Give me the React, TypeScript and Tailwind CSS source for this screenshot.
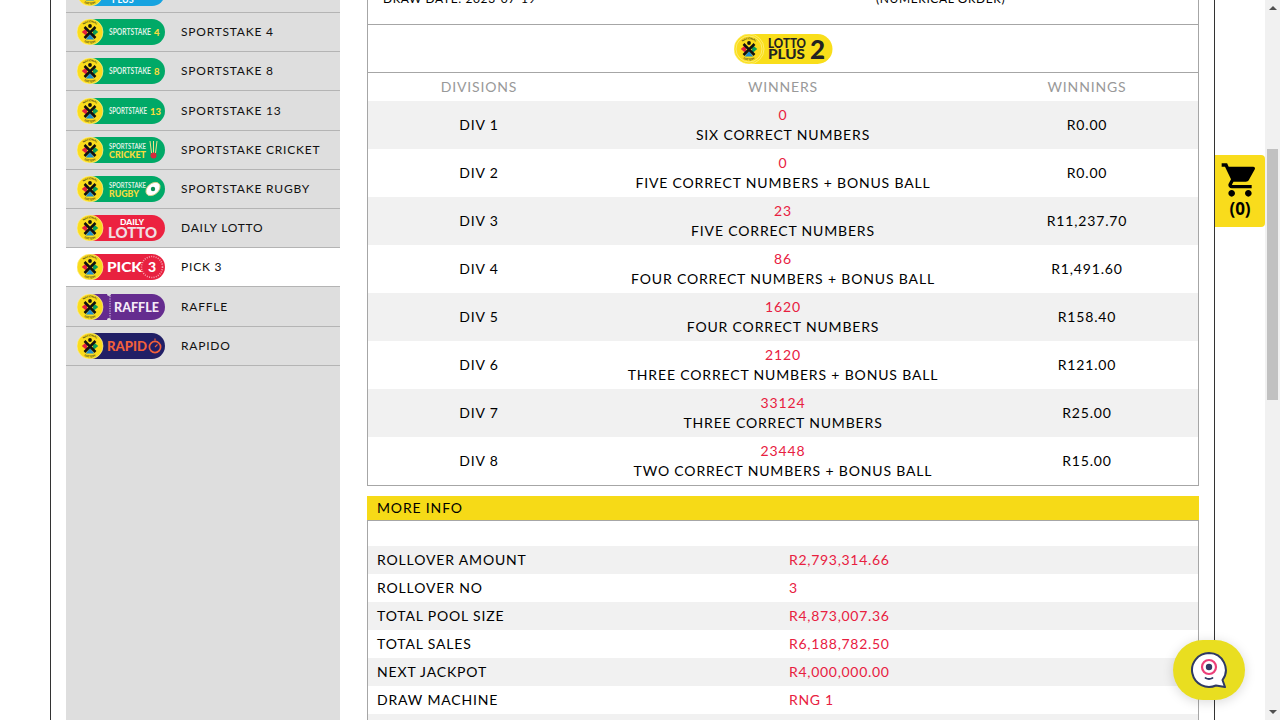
import { ReactNode } from "react"

const sideItems = [
  { id: "sp4", label: "SPORTSTAKE 4", height: "h-[39px]" },
  { id: "sp8", label: "SPORTSTAKE 8", height: "h-[39px]" },
  { id: "sp13", label: "SPORTSTAKE 13", height: "h-[40px]" },
  { id: "cricket", label: "SPORTSTAKE CRICKET", height: "h-[39px]" },
  { id: "rugby", label: "SPORTSTAKE RUGBY", height: "h-[39px]" },
  { id: "daily", label: "DAILY LOTTO", height: "h-[39px]" },
  { id: "pick3", label: "PICK 3", height: "h-[39px]", active: true },
  { id: "raffle", label: "RAFFLE", height: "h-[40px]" },
  { id: "rapido", label: "RAPIDO", height: "h-[39px]" },
]

const divisions = [
  { div: "DIV 1", count: "0", text: "SIX CORRECT NUMBERS", win: "R0.00" },
  { div: "DIV 2", count: "0", text: "FIVE CORRECT NUMBERS + BONUS BALL", win: "R0.00" },
  { div: "DIV 3", count: "23", text: "FIVE CORRECT NUMBERS", win: "R11,237.70" },
  { div: "DIV 4", count: "86", text: "FOUR CORRECT NUMBERS + BONUS BALL", win: "R1,491.60" },
  { div: "DIV 5", count: "1620", text: "FOUR CORRECT NUMBERS", win: "R158.40" },
  { div: "DIV 6", count: "2120", text: "THREE CORRECT NUMBERS + BONUS BALL", win: "R121.00" },
  { div: "DIV 7", count: "33124", text: "THREE CORRECT NUMBERS", win: "R25.00" },
  { div: "DIV 8", count: "23448", text: "TWO CORRECT NUMBERS + BONUS BALL", win: "R15.00" },
]

const moreInfo = [
  ["ROLLOVER AMOUNT", "R2,793,314.66"],
  ["ROLLOVER NO", "3"],
  ["TOTAL POOL SIZE", "R4,873,007.36"],
  ["TOTAL SALES", "R6,188,782.50"],
  ["NEXT JACKPOT", "R4,000,000.00"],
  ["DRAW MACHINE", "RNG 1"],
  ["", ""],
]

const sans = "Lato, sans-serif"

// round national lottery badge, 26 units across
const Badge = () => (
  <g>
    <circle cx="13" cy="13" r="13" fill="#fbdc1c" stroke="#fff4a8" strokeWidth="0.6" />
    <path d="M4.8 13 L10 8.5 L10 17.5 Z" fill="#e2233d" />
    <path d="M21.2 13 L16 8.5 L16 17.5 Z" fill="#0f9d58" />
    <path d="M13 15 L8.8 20.4 L17.2 20.4 Z" fill="#1d8fd1" />
    <path d="M7.5 8 L18.5 19 M18.5 8 L7.5 19" stroke="#111" strokeWidth="2.5" />
    <circle cx="13" cy="7" r="1.9" fill="#111" />
    <path id="ringTop" d="M3.4 13 A9.6 9.6 0 0 1 22.6 13" fill="none" />
    <path id="ringBottom" d="M1.6 13 A11.4 11.4 0 0 0 24.4 13" fill="none" />
    <text fontSize="2.8" fontWeight="700" fontFamily={sans} fill="#3a3a1a" textAnchor="middle" letterSpacing="0">
      <textPath href="#ringTop" startOffset="50%">NATIONAL</textPath>
    </text>
    <text fontSize="2.8" fontWeight="700" fontFamily={sans} fill="#3a3a1a" textAnchor="middle" letterSpacing="0">
      <textPath href="#ringBottom" startOffset="50%">LOTTERY</textPath>
    </text>
  </g>
)

const Logo = ({ id }: { id: string }) => {
  const fills: Record<string, string> = {
    sp4: "#00a967",
    sp8: "#00a967",
    sp13: "#00a967",
    cricket: "#00a967",
    rugby: "#00a967",
    daily: "#ec2240",
    pick3: "#e8213f",
    raffle: "#652c8f",
    rapido: "#211f66",
  }
  let inner: ReactNode = null
  if (id === "sp4" || id === "sp8" || id === "sp13") {
    const n = id === "sp4" ? "4" : id === "sp8" ? "8" : "13"
    inner = (
      <>
        <text x="32" y="16" fontSize="8.5" fontWeight="700" fontFamily={sans} fill="#dff0e4" textLength={id === "sp13" ? 38 : 42} lengthAdjust="spacingAndGlyphs" letterSpacing="0">SPORTSTAKE</text>
        <text x={id === "sp13" ? 73 : 77} y="16.5" fontSize="9.5" fontWeight="900" fontFamily={sans} fill="#f7dc3c" letterSpacing="0">{n}</text>
      </>
    )
  }
  if (id === "cricket") {
    inner = (
      <>
        <text x="32" y="12" fontSize="7.5" fontWeight="700" fontFamily={sans} fill="#dff0e4" textLength="37" lengthAdjust="spacingAndGlyphs" letterSpacing="0">SPORTSTAKE</text>
        <text x="32" y="21" fontSize="8.5" fontWeight="900" fontFamily={sans} fill="#f7dc3c" textLength="37" lengthAdjust="spacingAndGlyphs" letterSpacing="0">CRICKET</text>
        <path d="M73 4 L74.5 16 M76.5 4 L76.5 16 M80 4 L78.5 16" stroke="#f3e28a" strokeWidth="1" />
        <circle cx="76.5" cy="18.5" r="3" fill="#d9283c" />
      </>
    )
  }
  if (id === "rugby") {
    inner = (
      <>
        <text x="32" y="12" fontSize="7.5" fontWeight="700" fontFamily={sans} fill="#dff0e4" textLength="37" lengthAdjust="spacingAndGlyphs" letterSpacing="0">SPORTSTAKE</text>
        <text x="32" y="21" fontSize="8.5" fontWeight="900" fontFamily={sans} fill="#f7dc3c" textLength="30" lengthAdjust="spacingAndGlyphs" letterSpacing="0">RUGBY</text>
        <ellipse cx="76" cy="13" rx="8" ry="5.5" transform="rotate(-40 76 13)" fill="#fff" stroke="#d8d08a" strokeWidth="0.9" />
        <circle cx="76" cy="13" r="2.2" fill="#0a8f55" />
      </>
    )
  }
  if (id === "daily") {
    inner = (
      <>
        <text x="43" y="9.5" fontSize="7" fontWeight="900" fontFamily={sans} fill="#fff" textLength="24" lengthAdjust="spacingAndGlyphs" letterSpacing="0">DAILY</text>
        <text x="31" y="23" fontSize="15" fontWeight="900" fontFamily={sans} fill="#f0dfe2" textLength="49" lengthAdjust="spacingAndGlyphs" letterSpacing="0">LOTTO</text>
      </>
    )
  }
  if (id === "pick3") {
    inner = (
      <>
        <circle cx="75" cy="13" r="10.5" fill="none" stroke="#f7a3b0" strokeWidth="1.6" strokeDasharray="1 1.3" />
        <text x="30" y="18" fontSize="14" fontWeight="900" fontFamily={sans} fill="#fff" textLength="35" lengthAdjust="spacingAndGlyphs" letterSpacing="0">PICK</text>
        <text x="71" y="18" fontSize="14" fontWeight="900" fontFamily={sans} fill="#fff" letterSpacing="0">3</text>
      </>
    )
  }
  if (id === "raffle") {
    inner = (
      <>
        <circle cx="32" cy="0" r="2" fill="#dedede" />
        <circle cx="32" cy="26" r="2" fill="#dedede" />
        <path d="M33 2 V24" stroke="#f3e8f6" strokeWidth="0.9" strokeDasharray="1.2 1.2" />
        <text x="37" y="18" fontSize="12.5" fontWeight="900" fontFamily={sans} fill="#f5eaf7" textLength="45" lengthAdjust="spacingAndGlyphs" letterSpacing="0">RAFFLE</text>
      </>
    )
  }
  if (id === "rapido") {
    inner = (
      <>
        <text x="30" y="18" fontSize="14" fontWeight="900" fontFamily={sans} fill="#f2603a" textLength="40" lengthAdjust="spacingAndGlyphs" letterSpacing="0">RAPID</text>
        <circle cx="78" cy="14" r="5.6" fill="none" stroke="#f2603a" strokeWidth="1.7" />
        <path d="M78 5.5 V7.5 M78 14 L80.5 11.5" stroke="#f2603a" strokeWidth="1.1" />
      </>
    )
  }
  return (
    <svg width="88" height="26" viewBox="0 0 88 26" className="shrink-0">
      <rect x="2" y="0" width="86" height="26" rx="13" fill={fills[id]} />
      <Badge />
      {inner}
    </svg>
  )
}

const SideRow = ({ id, label, height, active }: { id: string; label: string; height: string; active?: boolean }) => (
  <div className={`${height} border-b border-[#b4b4b4] flex items-center pl-[11px] gap-[16px] text-[12px] tracking-[0.065em] text-[#111] ${active ? "bg-white" : ""}`}>
    <Logo id={id} />
    <span>{label}</span>
  </div>
)

const App = () => {
  return (
    <div className="h-[720px] w-[1280px] overflow-hidden flex bg-white text-black" style={{ fontFamily: "Lato, 'Noto Sans', sans-serif" }}>
      <div className="w-[1265px] relative overflow-hidden">
        <div className="ml-[50px] w-[1165px] h-[760px] -mt-[28px] border-x border-[#333] pl-[15px] pr-[15px] flex gap-[27px]">
          {/* sidebar */}
          <aside className="w-[274px] shrink-0 bg-[#dedede]">
            <div className="h-[41px] border-b border-[#b4b4b4] overflow-hidden flex items-end pl-[11px] pb-[6px]">
              <svg width="88" height="26" viewBox="0 0 88 26">
                <rect x="2" y="0" width="86" height="26" rx="13" fill="#16a3e0" />
                <Badge />
                <text x="35" y="23" fontSize="9" fontWeight="700" fill="#fff" fontFamily={sans}>PLUS</text>
              </svg>
            </div>
            {sideItems.map((item) => (
              <SideRow key={item.id} id={item.id} label={item.label} height={item.height} active={item.active} />
            ))}
          </aside>

          {/* results */}
          <main className="w-[832px] shrink-0 text-[14px] tracking-[0.06em]">
            <div className="border-x border-b border-[#a6a6a6] h-[53px] pl-[15px] grid grid-cols-[493px_1fr] text-[12px] tracking-[0.05em] pt-[18px] leading-[18px]">
              <span>DRAW DATE: 2023-07-19</span>
              <span>(NUMERICAL ORDER)</span>
            </div>
            <div className="border-x border-b border-[#a6a6a6] h-[48px] flex items-center justify-center">
              <svg width="99" height="30" viewBox="0 0 99 30" className="tracking-normal">
                <rect x="0.5" y="0" width="98" height="30" rx="15" fill="#f9de1a" />
                <circle cx="15" cy="15" r="15" fill="#fadf1c" stroke="#fff6a0" strokeWidth="0.6" />
                <g transform="translate(2 2)"><Badge /></g>
                <text x="34" y="14" fontSize="13.5" fontWeight="900" fontFamily={sans} fill="#222" textLength="38" lengthAdjust="spacingAndGlyphs">LOTTO</text>
                <text x="34" y="25" fontSize="13.5" fontWeight="900" fontFamily={sans} fill="#222" textLength="37" lengthAdjust="spacingAndGlyphs">PLUS</text>
                <text x="76" y="25" fontSize="26" fontWeight="900" fontFamily={sans} fill="#222">2</text>
              </svg>
            </div>
            <div className="border-x border-b border-[#a6a6a6]">
              <div className="grid grid-cols-[222px_1fr_222px] h-[28px] items-center text-center text-[#999] pb-[2px]">
                <span>DIVISIONS</span>
                <span>WINNERS</span>
                <span>WINNINGS</span>
              </div>
              {divisions.map((row, i) => (
                <div key={row.div} className={`grid grid-cols-[222px_1fr_222px] h-[48px] items-center text-center ${i % 2 === 0 ? "bg-[#f1f1f1]" : ""}`}>
                  <span className="pb-[1px]">{row.div}</span>
                  <div className="leading-[20px]">
                    <div className="text-[#e8203f]">{row.count}</div>
                    <div>{row.text}</div>
                  </div>
                  <span className="pb-[1px]">{row.win}</span>
                </div>
              ))}
            </div>

            <div className="mt-[10px] bg-[#f6da17] h-[25px] border-b border-[#a6a6a6] pl-[10px] pb-[1px] flex items-center">MORE INFO</div>
            <div className="border-x border-[#a6a6a6] pt-[25px]">
              {moreInfo.map(([label, value], i) => (
                <div key={i} className={`grid grid-cols-[412px_1fr] h-[28px] items-center pl-[9px] pb-[2px] ${i % 2 === 0 ? "bg-[#f1f1f1]" : ""}`}>
                  <span>{label}</span>
                  <span className="text-[#e8203f] tracking-[0.05em]">{value}</span>
                </div>
              ))}
            </div>
          </main>
        </div>

        {/* cart tab */}
        <div className="absolute left-[1215px] top-[155px] w-[50px] h-[72px] bg-[#f9dc1c] rounded-r-[4px] flex flex-col items-center pt-[5px]">
          <svg width="40" height="40" viewBox="0 0 24 24" fill="#000">
            <path d="M7 18c-1.1 0-1.99.9-1.99 2S5.9 22 7 22s2-.9 2-2-.9-2-2-2zM1 2v2h2l3.6 7.59-1.35 2.45c-.16.28-.25.61-.25.96 0 1.1.9 2 2 2h12v-2H7.42c-.14 0-.25-.11-.25-.25l.03-.12.9-1.63h7.45c.75 0 1.41-.41 1.75-1.03l3.58-6.49c.08-.14.12-.31.12-.48 0-.55-.45-1-1-1H5.21l-.94-2H1zm16 16c-1.1 0-1.99.9-1.99 2s.89 2 1.99 2 2-.9 2-2-.9-2-2-2z" />
          </svg>
          <span className="font-bold text-[17px] leading-[20px] -mt-[1px]" style={{ fontFamily: "'Open Sans', sans-serif" }}>(0)</span>
        </div>

        {/* chat bubble */}
        <div className="absolute left-[1173px] top-[640px] w-[72px] h-[60px] rounded-full bg-[#e9de20] shadow-[0_2px_12px_rgba(0,0,0,0.15)] flex items-center justify-center">
          <svg width="38" height="38" viewBox="0 0 38 38">
            <path d="M19 2 A17 17 0 1 0 26 34.5 L35 36 L32.5 29 A17 17 0 0 0 19 2 Z" fill="#fff" stroke="#2f3a63" strokeWidth="2" strokeLinejoin="round" />
            <circle cx="19" cy="16" r="7" fill="none" stroke="#ec3f78" strokeWidth="2.2" />
            <circle cx="19" cy="16" r="3.2" fill="#2f3a63" />
            <path d="M15.5 27 Q19 29 22.5 27" fill="none" stroke="#2f3a63" strokeWidth="1.8" strokeLinecap="round" />
          </svg>
        </div>
      </div>

      {/* scrollbar */}
      <div className="w-[15px] h-full bg-[#f1f1f1] flex flex-col items-center relative">
        <div className="mt-[6px] w-0 h-0 border-x-[4px] border-x-transparent border-b-[4px] border-b-[#505050]" />
        <div className="absolute top-[149px] left-[2px] w-[11px] h-[251px] bg-[#c1c1c1]" />
        <div className="absolute bottom-[6px] w-0 h-0 border-x-[4px] border-x-transparent border-t-[4px] border-t-[#505050]" />
      </div>
    </div>
  )
}

export default App
